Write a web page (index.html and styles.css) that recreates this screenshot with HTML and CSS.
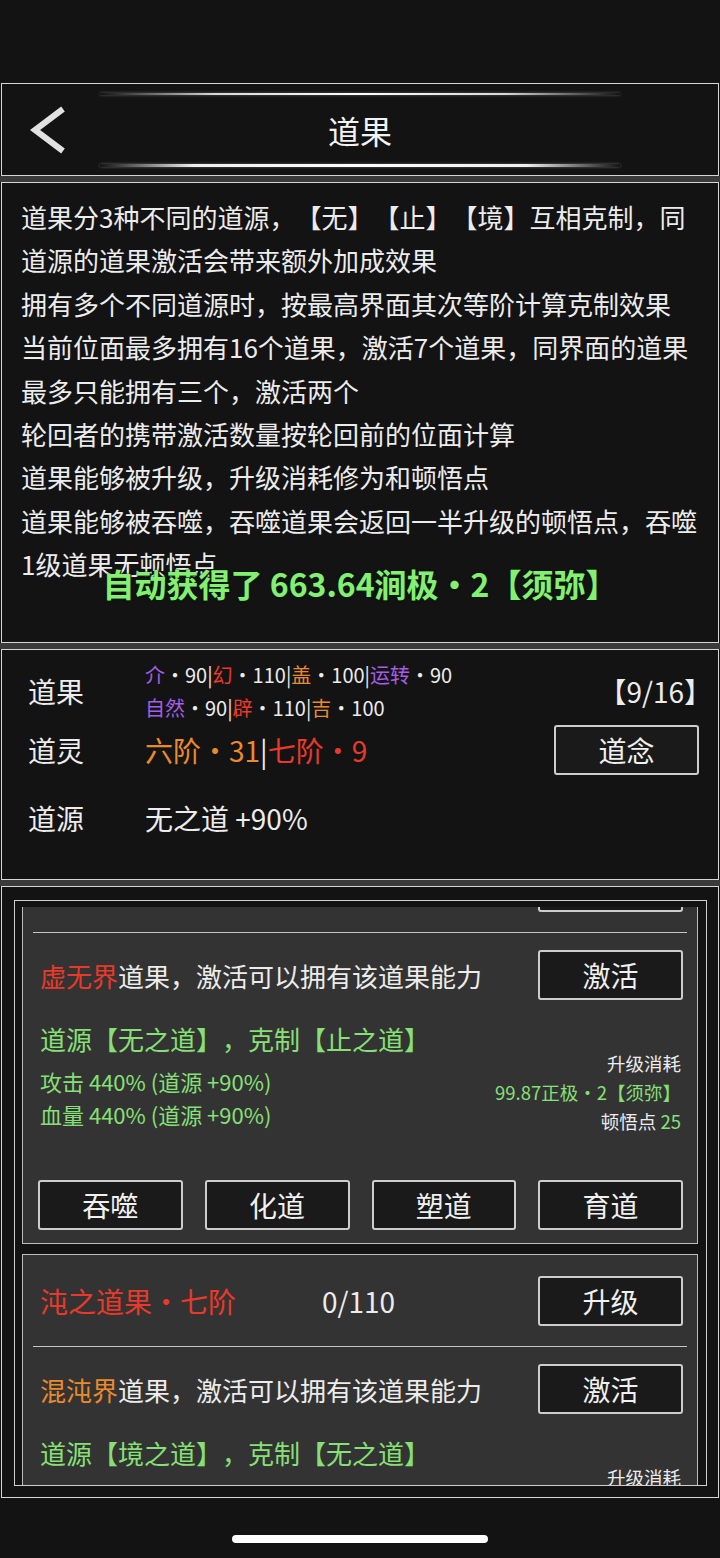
FILE: index.html
```html
<!DOCTYPE html>
<html lang="zh-CN">
  <head>
    <meta charset="UTF-8" />
    <meta name="viewport" content="width=device-width, initial-scale=1.0" />
    <title>道果</title>
    <link rel="stylesheet" href="styles.css">
  </head>
  <body>
    <div class="status-space"></div>

    <!-- 顶部标题栏 -->
    <div class="panel header">
      <div class="glow"></div>
      <div class="title-row">
        <a class="back" href="#">
          <svg width="40" height="50" viewBox="0 0 40 50">
            <polyline points="34,4 6,25 34,46" fill="none" stroke="#e2e2e2" stroke-width="6" />
          </svg>
        </a>
        <h1>道果</h1>
        <span></span>
      </div>
      <div class="glow glow-bottom"></div>
    </div>
    <div class="sep"></div>

    <!-- 规则说明 -->
    <div class="panel intro">
      <p>道果分3种不同的道源，【无】【止】【境】互相克制，同道源的道果激活会带来额外加成效果</p>
      <p>拥有多个不同道源时，按最高界面其次等阶计算克制效果</p>
      <p>当前位面最多拥有16个道果，激活7个道果，同界面的道果最多只能拥有三个，激活两个</p>
      <p>轮回者的携带激活数量按轮回前的位面计算</p>
      <p>道果能够被升级，升级消耗修为和顿悟点</p>
      <p>道果能够被吞噬，吞噬道果会返回一半升级的顿悟点，吞噬1级道果无顿悟点</p>
      <div class="toast">自动获得了 663.64涧极·2【须弥】</div>
    </div>
    <div class="sep"></div>

    <!-- 当前状态 -->
    <div class="panel summary">
      <div class="stat-row row-fruit">
        <span class="stat-label">道果</span>
        <div class="stat-value small">
          <div><span class="purple">介</span>·90|<span class="red">幻</span>·110|<span class="orange">盖</span>·100|<span class="purple">运转</span>·90</div>
          <div><span class="purple">自然</span>·90|<span class="red">辟</span>·110|<span class="orange">吉</span>·100</div>
        </div>
        <span class="count">【9/16】</span>
      </div>
      <div class="stat-row row-spirit">
        <span class="stat-label">道灵</span>
        <div class="stat-value"><span class="orange">六阶·31</span>|<span class="red">七阶·9</span></div>
        <button class="btn">道念</button>
      </div>
      <div class="stat-row row-source">
        <span class="stat-label">道源</span>
        <div class="stat-value">无之道 +90%</div>
      </div>
    </div>
    <div class="sep"></div>

    <!-- 道果列表 -->
    <div class="panel list-panel">
      <div class="scroll-frame">
        <div class="scroll-view">
          <div class="scroll-list">
            <div class="fruit-card">
              <div class="card-head">
                <span class="card-name red">虚之道果·七阶</span>
                <span class="card-progress">0/110</span>
                <button class="btn">升级</button>
              </div>
              <div class="card-divider"></div>
              <div class="card-activate">
                <span><span class="red">虚无界</span>道果，激活可以拥有该道果能力</span>
                <button class="btn">激活</button>
              </div>
              <div class="card-source">道源【无之道】，克制【止之道】</div>
              <div class="card-detail">
                <div class="detail-left">
                  <div>攻击 440% (道源 +90%)</div>
                  <div>血量 440% (道源 +90%)</div>
                </div>
                <div class="detail-right">
                  <div class="white">升级消耗</div>
                  <div>99.87正极·2【须弥】</div>
                  <div><span class="white">顿悟点</span> 25</div>
                </div>
              </div>
              <div class="card-actions">
                <button class="btn">吞噬</button>
                <button class="btn">化道</button>
                <button class="btn">塑道</button>
                <button class="btn">育道</button>
              </div>
            </div>

            <div class="fruit-card">
              <div class="card-head">
                <span class="card-name red">沌之道果·七阶</span>
                <span class="card-progress">0/110</span>
                <button class="btn">升级</button>
              </div>
              <div class="card-divider"></div>
              <div class="card-activate">
                <span><span class="orange">混沌界</span>道果，激活可以拥有该道果能力</span>
                <button class="btn">激活</button>
              </div>
              <div class="card-source">道源【境之道】，克制【无之道】</div>
              <div class="card-detail">
                <div class="detail-left">
                  <div>攻击 400% (道源 +0%)</div>
                  <div>血量 400% (道源 +0%)</div>
                </div>
                <div class="detail-right">
                  <div class="white">升级消耗</div>
                  <div>99.87正极·2【须弥】</div>
                  <div><span class="white">顿悟点</span> 25</div>
                </div>
              </div>
              <div class="card-actions">
                <button class="btn">吞噬</button>
                <button class="btn">化道</button>
                <button class="btn">塑道</button>
                <button class="btn">育道</button>
              </div>
            </div>
          </div>
        </div>
      </div>
    </div>

    <div class="home-bar"><span></span></div>
  </body>
</html>
```

FILE: styles.css
```css
* {
  margin: 0;
  padding: 0;
  box-sizing: border-box;
}

body {
  width: 720px;
  height: 1558px;
  overflow: hidden;
  background-color: #131313;
  color: #ececec;
  font-family: "Noto Sans CJK SC", "Noto Sans", sans-serif;
  text-spacing-trim: space-all;
}

.status-space {
  height: 83px;
}

.panel {
  margin: 0 1px;
  border: 1px solid #d6d6d6;
  background-color: #131313;
}

.sep {
  height: 6px;
  background-color: #3a3a3a;
}

/* 颜色 */
.red {
  color: #e8392b;
}

.orange {
  color: #e98a2e;
}

.purple {
  color: #a55ee4;
}

.white {
  color: #ececec;
}

/* 标题栏 */
.header {
  height: 93px;
  display: flex;
  flex-direction: column;
  padding: 8px 0;
}

.glow {
  height: 2px;
  margin: 1px 98px 0;
  background: linear-gradient(90deg, rgba(255, 255, 255, 0), #d8d8d8 22%, #ffffff 50%, #d8d8d8 78%, rgba(255, 255, 255, 0));
  box-shadow: 0 0 3px rgba(255, 255, 255, 0.35);
}

.glow-bottom {
  height: 3px;
  margin-top: 0;
  background: linear-gradient(90deg, rgba(255, 255, 255, 0), #f0f0f0 18%, #ffffff 50%, #f0f0f0 82%, rgba(255, 255, 255, 0));
}

.title-row {
  height: 69px;
  display: grid;
  grid-template-columns: 1fr auto 1fr;
  align-items: center;
}

.back {
  display: flex;
  padding-left: 27px;
}

.title-row h1 {
  font-size: 32px;
  font-weight: normal;
  color: #f2f2f2;
}

/* 说明 */
.intro {
  position: relative;
  height: 461px;
  padding: 12px 14px 0 19px;
  font-size: 26px;
  line-height: 43.4px;
  color: #ececec;
}

.toast {
  position: absolute;
  top: 380px;
  left: 0;
  right: 0;
  text-align: center;
  font-size: 32px;
  font-weight: bold;
  line-height: 40px;
  color: #84ef72;
  text-shadow: 0 0 2px #0b1f08, 1px 1px 1px #0b1f08;
}

/* 状态 */
.summary {
  height: 231px;
  padding: 8px 19px 0 26px;
}

.stat-row {
  display: flex;
  align-items: center;
  font-size: 28px;
}

.row-fruit {
  height: 66px;
}

.row-spirit {
  height: 52px;
}

.row-source {
  height: 56px;
  margin-top: 14px;
}

.stat-label {
  width: 117px;
  color: #ececec;
}

.stat-value {
  flex: 1;
}

.stat-value.small {
  font-size: 20px;
  line-height: 33px;
}

.count {
  margin-right: -13px;
}

.btn {
  width: 145px;
  height: 50px;
  margin-left: auto;
  background-color: #1a1a1a;
  border: 2px solid #cdcdcd;
  border-radius: 3px;
  color: #f0f0f0;
  font-family: inherit;
  font-size: 28px;
  cursor: pointer;
}

/* 列表 */
.list-panel {
  height: 612px;
  padding: 13px 11px 11px 12px;
}

.scroll-frame {
  height: 586px;
  border: 1px solid #cfcfcf;
  padding: 6px 8px 0 7px;
}

.scroll-view {
  height: 578px;
  overflow: hidden;
}

.scroll-list {
  margin-top: -67px;
}

.fruit-card {
  border: 1px solid #bcbcbc;
  background-color: #333333;
  margin-bottom: 10px;
}

.card-head {
  height: 91px;
  display: flex;
  align-items: center;
  padding: 0 14px 0 17px;
  font-size: 28px;
}

.card-name {
  width: 282px;
}

.card-divider {
  height: 1px;
  margin: 0 10px;
  background-color: #c4c4c4;
}

.card-activate {
  display: flex;
  align-items: center;
  padding: 17px 14px 0 17px;
  font-size: 26px;
}

.card-source {
  margin-top: 22px;
  padding-left: 17px;
  font-size: 26px;
  line-height: 34px;
  color: #86e076;
}

.card-detail {
  margin-top: -7px;
  display: flex;
  justify-content: space-between;
  padding: 0 16px 0 17px;
  color: #86e076;
}

.detail-left {
  padding-top: 16px;
  font-size: 22px;
  line-height: 33px;
}

.detail-right {
  text-align: right;
  font-size: 18.5px;
  line-height: 29px;
}

.card-actions {
  margin-top: 44px;
  display: grid;
  grid-template-columns: repeat(4, 1fr);
  gap: 22px;
  padding: 0 14px 13px 15px;
}

.card-actions .btn {
  width: auto;
  margin-left: 0;
}

.home-bar {
  display: flex;
  justify-content: center;
  padding-top: 37px;
}

.home-bar span {
  width: 256px;
  height: 8px;
  border-radius: 4px;
  background-color: #ffffff;
}
```
